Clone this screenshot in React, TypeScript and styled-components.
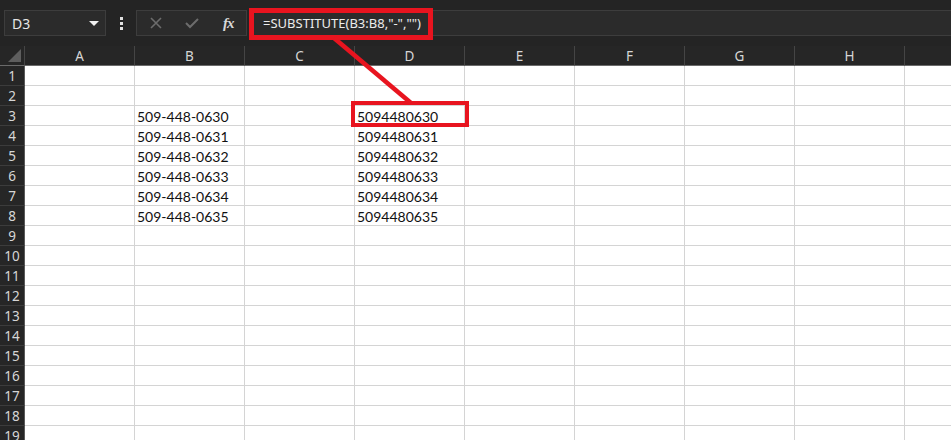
import React from 'react';
import styled, { createGlobalStyle } from 'styled-components';

const GlobalStyle = createGlobalStyle`
  html, body {
    margin: 0;
    padding: 0;
    background: #262626;
  }
`;

const COLS = ['A', 'B', 'C', 'D', 'E', 'F', 'G', 'H', 'I'];
const ROW_COUNT = 20;

const data: Record<string, string> = {};
for (let i = 0; i < 6; i++) {
  data[`B${i + 3}`] = `509-448-063${i}`;
  data[`D${i + 3}`] = `509448063${i}`;
}

const Page = styled.div`
  position: relative;
  width: 951px;
  height: 440px;
  overflow: hidden;
  background: #262626;
  font-family: 'Noto Sans', 'Open Sans', sans-serif;
`;

const TopBar = styled.div`
  display: flex;
  align-items: flex-start;
  height: 46px;
  box-sizing: border-box;
  padding: 10px 0 0 4px;
  background: #242424;
`;

const NameBox = styled.div`
  display: flex;
  align-items: center;
  justify-content: space-between;
  width: 102px;
  height: 26px;
  box-sizing: border-box;
  padding: 0 6px 0 7px;
  background: #2b2b2b;
  border: 1px solid #3d3d3d;
  color: #e6e6e6;
  font-size: 14px;
`;

const Caret = styled.span`
  width: 0;
  height: 0;
  border-style: solid;
  border-width: 5px 5px 0 5px;
  border-color: #f0f0f0 transparent transparent transparent;
`;

const Dots = styled.div`
  display: flex;
  flex-direction: column;
  align-items: center;
  justify-content: center;
  gap: 2px;
  width: 30px;
  height: 26px;

  span {
    width: 3px;
    height: 3px;
    background: #e0e0e0;
  }
`;

const ButtonGroup = styled.div`
  display: flex;
  align-items: center;
  width: 111px;
  height: 26px;
  box-sizing: border-box;
  background: #2b2b2b;
  border: 1px solid #3d3d3d;
`;

const IconButton = styled.div<{ $w: number }>`
  display: flex;
  align-items: center;
  justify-content: center;
  width: ${p => p.$w}px;
  height: 100%;
`;

const Fx = styled.span`
  font-family: 'Liberation Serif', serif;
  font-style: italic;
  font-weight: bold;
  font-size: 15px;
  color: #d8d8d8;
  letter-spacing: -1px;
`;

const FormulaInput = styled.div`
  flex: 1;
  display: flex;
  align-items: center;
  height: 26px;
  margin-left: 2px;
  box-sizing: border-box;
  padding-left: 13px;
  background: #2b2b2b;
  border: 1px solid #3d3d3d;
  border-right: none;
  color: #ececec;
  font-size: 13px;
  white-space: nowrap;
`;

const Sheet = styled.div`
  display: grid;
  grid-template-columns: 25px repeat(${COLS.length}, 110px);
  grid-auto-rows: 20px;
`;

const Corner = styled.div`
  position: relative;
  box-sizing: border-box;
  border-right: 1px solid #454545;
  border-bottom: 1px solid #6a6a6a;
  background: #262626;
  display: flex;
  align-items: flex-end;
  justify-content: flex-end;
  padding: 0 3px 3px 0;
`;

const ColHeader = styled.div`
  box-sizing: border-box;
  display: flex;
  align-items: center;
  justify-content: center;
  background: #262626;
  border-right: 1px solid #454545;
  border-bottom: 1px solid #6a6a6a;
  color: #d6d6d6;
  font-size: 13.5px;
`;

const RowHeader = styled.div`
  box-sizing: border-box;
  display: flex;
  align-items: center;
  justify-content: center;
  background: #262626;
  border-right: 1px solid #5a5a5a;
  border-bottom: 1px solid #3c3c3c;
  color: #d6d6d6;
  font-size: 13.5px;
`;

const Cell = styled.div`
  box-sizing: border-box;
  display: flex;
  align-items: center;
  padding: 1px 0 0 2px;
  background: #ffffff;
  border-right: 1px solid #d4d4d4;
  border-bottom: 1px solid #d4d4d4;
  color: #111;
  font-family: 'Lato', 'Open Sans', sans-serif;
  font-size: 14px;
  white-space: nowrap;
  overflow: hidden;
`;

const Highlight = styled.div<{ $x: number; $y: number; $w: number; $h: number; $t: number }>`
  position: absolute;
  left: ${p => p.$x}px;
  top: ${p => p.$y}px;
  width: ${p => p.$w}px;
  height: ${p => p.$h}px;
  box-sizing: border-box;
  border: ${p => p.$t}px solid #e8141f;
  pointer-events: none;
`;

const Pointer = styled.svg`
  position: absolute;
  left: 0;
  top: 0;
  pointer-events: none;
`;

const App: React.FC = () => {
  const rows = Array.from({ length: ROW_COUNT }, (_, i) => i + 1);

  return (
    <Page>
      <GlobalStyle />
      <TopBar>
        <NameBox>
          D3
          <Caret />
        </NameBox>
        <Dots>
          <span />
          <span />
          <span />
        </Dots>
        <ButtonGroup>
          <IconButton $w={38}>
            <svg width="12" height="12" viewBox="0 0 12 12">
              <path d="M1 1 L11 11 M11 1 L1 11" stroke="#6c6c6c" strokeWidth="1.6" />
            </svg>
          </IconButton>
          <IconButton $w={36}>
            <svg width="14" height="12" viewBox="0 0 14 12">
              <path d="M1 6 L5 10 L13 2" stroke="#6c6c6c" strokeWidth="2" fill="none" />
            </svg>
          </IconButton>
          <IconButton $w={36}>
            <Fx>fx</Fx>
          </IconButton>
        </ButtonGroup>
        <FormulaInput>=SUBSTITUTE(B3:B8,"-","")</FormulaInput>
      </TopBar>

      <Sheet>
        <Corner>
          <svg width="13" height="13" viewBox="0 0 13 13">
            <polygon points="13,0 13,13 0,13" fill="#5e5e5e" />
          </svg>
        </Corner>
        {COLS.map(c => (
          <ColHeader key={c}>{c}</ColHeader>
        ))}
        {rows.map(r => (
          <React.Fragment key={r}>
            <RowHeader>{r}</RowHeader>
            {COLS.map(c => (
              <Cell key={c}>{data[`${c}${r}`] ?? ''}</Cell>
            ))}
          </React.Fragment>
        ))}
      </Sheet>

      <Highlight $x={249} $y={8} $w={184} $h={32} $t={5} />
      <Highlight $x={351} $y={101} $w={118} $h={26} $t={4} />
      <Pointer width="951" height="440">
        <line x1="334" y1="38" x2="411" y2="103" stroke="#e8141f" strokeWidth="4.5" />
      </Pointer>
    </Page>
  );
};

export default App;
